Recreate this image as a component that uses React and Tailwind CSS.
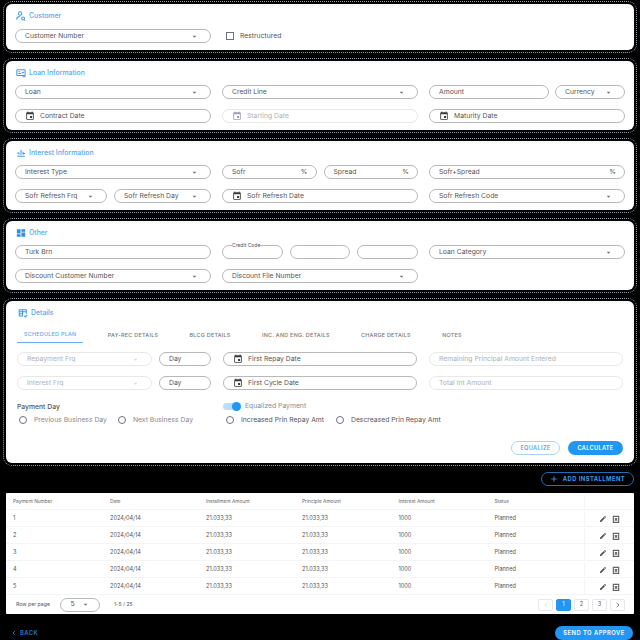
import { Plus, ChevronLeft, ChevronRight } from "lucide-react";

const CalendarIcon = ({ muted }) => (
  <svg viewBox="0 0 24 24" className={`size-[10px] shrink-0 ${muted ? "fill-gray-400" : "fill-[#3a3a3a]"}`}>
    <path d="M17 12h-5v5h5v-5zM16 1v2H8V1H6v2H5c-1.11 0-1.99.9-1.99 2L3 19c0 1.1.89 2 2 2h14c1.1 0 2-.9 2-2V5c0-1.1-.9-2-2-2h-1V1h-2zm3 18H5V8h14v11z" />
  </svg>
);

const Arrow = ({ muted }) => (
  <svg viewBox="0 0 24 24" className={`size-[9px] shrink-0 ${muted ? "fill-gray-300" : "fill-gray-500"}`}>
    <path d="M7 10l5 5 5-5z" />
  </svg>
);

function Field({ label, arrow, date, suffix, disabled, className = "" }) {
  return (
    <div
      className={`flex h-[14px] min-w-0 items-center rounded-full border bg-white text-[6.8px] leading-none whitespace-nowrap ${
        disabled ? "border-[#e8e8e8] text-[#b0b0b0]" : "border-[#b8b8b8] text-[#555]"
      } ${date ? "gap-[5px] pl-[9px]" : "justify-between pl-[9px]"} ${arrow ? "pr-[11px]" : "pr-[8px]"} ${className}`}
    >
      {date && <CalendarIcon muted={disabled} />}
      <span>{label}</span>
      {arrow && <Arrow muted={disabled} />}
      {suffix && <span>{suffix}</span>}
    </div>
  );
}

function Card({ title, icon, children, className = "" }) {
  return (
    <section className="rounded-[9px] border border-dotted border-gray-400 p-[2px]">
      <div className={`rounded-[6px] bg-white px-[9px] ${className}`}>
        <div className="flex h-[24px] items-center gap-[3px] pl-[1px] text-[6.9px] font-medium text-[#55a9ee]">
          {icon}
          <span>{title}</span>
        </div>
        {children}
      </div>
    </section>
  );
}

const iconClass = "size-[10px] shrink-0 fill-none stroke-[#3f9ae6] stroke-[2.5]";

const CustomerIcon = () => (
  <svg viewBox="0 0 24 24" className={iconClass}>
    <circle cx="10" cy="6" r="4" />
    <path d="M2 21v-3c0-3 3-5 8-5" />
    <circle cx="17" cy="18" r="3.5" />
    <path d="M20 21l2 2" />
  </svg>
);

const LoanIcon = () => (
  <svg viewBox="0 0 24 24" className={iconClass}>
    <rect x="2" y="4" width="20" height="14" rx="2" />
    <path d="M6 9h4M6 13h6M14 10l2 2 3-3M16 21h7" />
  </svg>
);

const InterestIcon = () => (
  <svg viewBox="0 0 24 24" className={iconClass}>
    <path d="M3 20h18M7 16v-5M12 16V5M17 16V9M3 12h3M18 13h4" />
  </svg>
);

const OtherIcon = () => (
  <svg viewBox="0 0 24 24" className="size-[10px] shrink-0 fill-[#2f8fe0]">
    <path d="M2 3h9v10H2zM13 3h9v6h-9zM13 11h9v10h-9zM2 15h9v6H2z" />
  </svg>
);

const DetailsIcon = () => (
  <svg viewBox="0 0 24 24" className={iconClass}>
    <path d="M20 14V4H3v15h9M3 9h17M3 14h9M11 4v15M15 19l2.5 2.5L22 17" />
  </svg>
);

function Radio({ label, muted, className = "" }) {
  return (
    <label className={`flex items-center gap-[7px] text-[6.8px] whitespace-nowrap ${muted ? "text-[#8a8a8a]" : "text-[#555]"} ${className}`}>
      <span className="size-[8px] rounded-full border border-gray-500" />
      {label}
    </label>
  );
}

const tabs = ["SCHEDULED PLAN", "PAY-REC DETAILS", "BLCG DETAILS", "INC. AND ENG. DETAILS", "CHARGE DETAILS", "NOTES"];

const columns = ["Payment Number", "Date", "Installment Amount", "Principle Amount", "Interest Amount", "Status"];
const colTemplate = "grid-cols-[97px_96px_96px_96.5px_96px_89.5px_1fr]";

function Row({ n }) {
  return (
    <div className={`grid h-[17px] ${colTemplate} items-center border-b border-gray-100 pt-[1px] pl-[7px] text-[5.6px] text-[#555]`}>
      <span>{n}</span>
      <span>2024/04/14</span>
      <span>21.033,33</span>
      <span>21.033,33</span>
      <span>1000</span>
      <span>Planned</span>
      <div className="flex h-full items-center gap-[5px] border-l border-gray-100 pl-[14px]">
        <svg viewBox="0 0 24 24" className="size-[8px] fill-[#555]">
          <path d="M3 17.25V21h3.75L17.81 9.94l-3.75-3.75L3 17.25zM20.71 7.04c.39-.39.39-1.02 0-1.41l-2.34-2.34c-.39-.39-1.02-.39-1.41 0l-1.83 1.83 3.75 3.75 1.83-1.83z" />
        </svg>
        <svg viewBox="0 0 24 24" className="size-[8px] fill-none stroke-[#666] stroke-[3.5]">
          <path d="M4 4h16v18H4zM10 9v8M14 9v8" />
        </svg>
      </div>
    </div>
  );
}

function PageButton({ children, active }) {
  return (
    <button
      className={`flex h-[12px] w-[15px] items-center justify-center rounded-[2px] border text-[5.6px] ${
        active ? "border-[#2196f3] bg-[#2196f3] text-white" : "border-gray-200 bg-white text-[#555]"
      }`}
    >
      {children}
    </button>
  );
}

export default function App() {
  return (
    <div className="h-[640px] w-[640px] overflow-hidden bg-black px-[3px] pt-[1px] font-['Inter',sans-serif]">
      <div className="flex flex-col gap-[5px]">
        <Card title="Customer" icon={<CustomerIcon />} className="h-[46px]">
          <div className="mt-[1px] grid grid-cols-3 gap-[11px]">
            <Field label="Customer Number" arrow />
            <label className="flex items-center gap-[6px] pl-[4px] text-[6.8px] text-[#555]">
              <span className="size-[8px] border border-gray-500" />
              Restructured
            </label>
          </div>
        </Card>

        <Card title="Loan Information" icon={<LoanIcon />} className="h-[69px]">
          <div className="grid grid-cols-3 gap-x-[11px] gap-y-[10px]">
            <Field label="Loan" arrow />
            <Field label="Credit Line" arrow />
            <div className="flex gap-[6px]">
              <Field label="Amount" className="flex-1" />
              <Field label="Currency" arrow className="w-[70px]" />
            </div>
            <Field label="Contract Date" date />
            <Field label="Starting Date" date disabled />
            <Field label="Maturity Date" date />
          </div>
        </Card>

        <Card title="Interest Information" icon={<InterestIcon />} className="h-[69px]">
          <div className="grid grid-cols-3 gap-x-[11px] gap-y-[10px]">
            <Field label="Interest Type" arrow />
            <div className="flex gap-[7px]">
              <Field label="Sofr" suffix="%" className="flex-1" />
              <Field label="Spread" suffix="%" className="flex-1" />
            </div>
            <Field label="Sofr+Spread" suffix="%" />
            <div className="flex gap-[7px]">
              <Field label="Sofr Refresh Frq" arrow className="w-[92px]" />
              <Field label="Sofr Refresh Day" arrow className="flex-1" />
            </div>
            <Field label="Sofr Refresh Date" date />
            <Field label="Sofr Refresh Code" arrow />
          </div>
        </Card>

        <Card title="Other" icon={<OtherIcon />} className="h-[69px]">
          <div className="grid grid-cols-3 gap-x-[11px] gap-y-[10px]">
            <Field label="Turk Brn" />
            <div className="relative flex gap-[7px]">
              <Field label="" className="flex-1" />
              <Field label="" className="flex-1" />
              <Field label="" className="flex-1" />
              <span className="absolute top-[-3px] left-[10px] bg-white text-[5px] leading-[6px] text-[#555]">Credit Code</span>
            </div>
            <Field label="Loan Category" arrow />
            <Field label="Discount Customer Number" arrow />
            <Field label="Discount File Number" arrow />
          </div>
        </Card>

        <Card title="Details" icon={<DetailsIcon />} className="h-[162px] !px-[11px]">
          <div className="mt-[2px] flex gap-[31.3px] pl-[7px] text-[5.4px] font-medium tracking-[0.05em] whitespace-nowrap text-[#777]">
            {tabs.map((t, i) => (
              <span
                key={t}
                className={`-mx-[7px] flex h-[16px] items-center px-[7px] ${i === 0 ? "border-b border-[#64b0ee] text-[#55a9ee]" : ""}`}
              >
                {t}
              </span>
            ))}
          </div>
          <div className="mt-[9px] grid grid-cols-3 gap-x-[12px] gap-y-[10px]">
            <div className="flex gap-[7px]">
              <Field label="Repayment Frq" arrow disabled className="flex-1" />
              <Field label="Day" className="w-[52px]" />
            </div>
            <Field label="First Repay Date" date />
            <Field label="Remaining Principal Amount Entered" disabled />
            <div className="flex gap-[7px]">
              <Field label="Interest Frq" arrow disabled className="flex-1" />
              <Field label="Day" className="w-[52px]" />
            </div>
            <Field label="First Cycle Date" date />
            <Field label="Total Int Amount" disabled />
          </div>
          <div className="mt-[10px] grid grid-cols-3 gap-x-[12px]">
            <div>
              <div className="h-[14px] text-[6.8px] leading-[14px] font-medium text-[#555]">Payment Day</div>
              <div className="mt-[1px] flex gap-[11px] pl-[2px]">
                <Radio label="Previous Business Day" muted />
                <Radio label="Next Business Day" muted />
              </div>
            </div>
            <div className="col-span-2">
              <div className="-mt-[1px] flex h-[14px] items-center gap-[4px] text-[6.8px] text-[#8a8a8a]">
                <span className="relative h-[7px] w-[18px] rounded-full bg-[#bbdefb]">
                  <span className="absolute top-[-1px] right-0 size-[9px] rounded-full bg-[#2196f3]" />
                </span>
                Equalized Payment
              </div>
              <div className="mt-[2px] flex gap-[12px] pl-[3px]">
                <Radio label="Increased Prin Repay Amt" />
                <Radio label="Descreased Prin Repay Amt" />
              </div>
            </div>
          </div>
          <div className="mt-[16px] flex justify-end gap-[8px] text-[5.6px] font-semibold tracking-[0.06em]">
            <button className="h-[14px] w-[49px] rounded-full border border-[#a9d2f5] text-[#55a9ee]">EQUALIZE</button>
            <button className="h-[14px] w-[55px] rounded-full bg-[#2196f3] text-white">CALCULATE</button>
          </div>
        </Card>
      </div>

      <div className="mt-[6px] flex justify-end pr-[3px]">
        <button className="flex h-[14px] w-[93px] items-center justify-center gap-[5px] rounded-full border border-[#1f6fb5] text-[5.8px] font-bold tracking-[0.08em] text-[#3d9be9]">
          <Plus className="size-[8px]" strokeWidth={2.5} />
          ADD INSTALLMENT
        </button>
      </div>

      <div className="mx-[3px] mt-[7px] h-[121px] rounded-[1px] bg-white">
        <div className={`grid h-[17px] ${colTemplate} items-center border-b border-gray-100 pt-[2px] pl-[7px] text-[4.8px] text-[#666]`}>
          {columns.map((c) => (
            <span key={c}>{c}</span>
          ))}
          <span className="h-full border-l border-gray-100" />
        </div>
        {[1, 2, 3, 4, 5].map((n) => (
          <Row key={n} n={n} />
        ))}
        <div className="flex h-[19px] items-center pr-[9px] pl-[10px] text-[5.2px] text-[#555]">
          <span>Row per page</span>
          <div className="ml-[10px] flex h-[14px] w-[40px] items-center justify-center gap-[6px] rounded-full border border-[#b8b8b8] text-[6.8px]">
            5
            <Arrow />
          </div>
          <span className="ml-[14px]">1-5 / 25</span>
          <div className="ml-auto flex gap-[3px]">
            <PageButton>
              <ChevronLeft className="size-[8px] text-gray-300" />
            </PageButton>
            <PageButton active>1</PageButton>
            <PageButton>2</PageButton>
            <PageButton>3</PageButton>
            <PageButton>
              <ChevronRight className="size-[8px] text-[#444]" />
            </PageButton>
          </div>
        </div>
      </div>

      <div className="mt-[12px] flex items-center justify-between pr-[4px] pl-[7px]">
        <button className="flex items-center gap-[2px] text-[5.8px] font-bold tracking-[0.08em] text-[#2a6db0]">
          <ChevronLeft className="size-[8px]" strokeWidth={3} />
          BACK
        </button>
        <button className="h-[14px] w-[78px] rounded-full bg-[#2196f3] text-[5.8px] font-semibold tracking-[0.08em] text-white">
          SEND TO APPROVE
        </button>
      </div>
    </div>
  );
}
